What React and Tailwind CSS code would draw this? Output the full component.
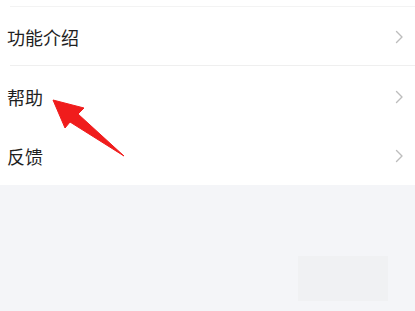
import React from 'react';

const Chevron = () => (
  <svg width="9" height="14" viewBox="0 0 9 14" fill="none" className="shrink-0">
    <path d="M1.5 1.5 L7 7 L1.5 12.5" stroke="#bdbdbd" strokeWidth="1.4" strokeLinecap="round" strokeLinejoin="round" />
  </svg>
);

const Row = ({ label, divider }) => (
  <div className="relative h-[59px] flex items-center justify-between pl-[7px] pr-[11px]">
    <span className="text-[18px] text-[#1f1f1f] leading-none">{label}</span>
    <Chevron />
    {divider && <div className="absolute left-[10px] right-0 bottom-0 h-px bg-[#efefef]"></div>}
  </div>
);

export default function App() {
  return (
    <div
      className="relative w-[415px] h-[311px] overflow-hidden bg-[#f4f5f8]"
      style={{ fontFamily: '"Noto Sans CJK SC", "Noto Sans", sans-serif' }}
    >
      {/* Menu list */}
      <div className="bg-white">
        <div className="h-[7px] ml-[10px] border-b border-[#f3f3f3]"></div>
        <Row label="功能介绍" divider />
        <div className="h-px"></div>
        <Row label="帮助" />
        <Row label="反馈" />
      </div>

      {/* Faded toast box */}
      <div className="absolute left-[298px] top-[256px] w-[90px] h-[45px] bg-[#f0f1f3]"></div>

      {/* Red annotation arrow */}
      <svg className="absolute left-0 top-0 pointer-events-none" width="415" height="311">
        <polygon
          points="53,100 84,108 78,114 124,156 70,122 65,128"
          fill="#f01c1c"
          stroke="#f01c1c"
          strokeWidth="1"
          strokeLinejoin="round"
        />
      </svg>
    </div>
  );
}
